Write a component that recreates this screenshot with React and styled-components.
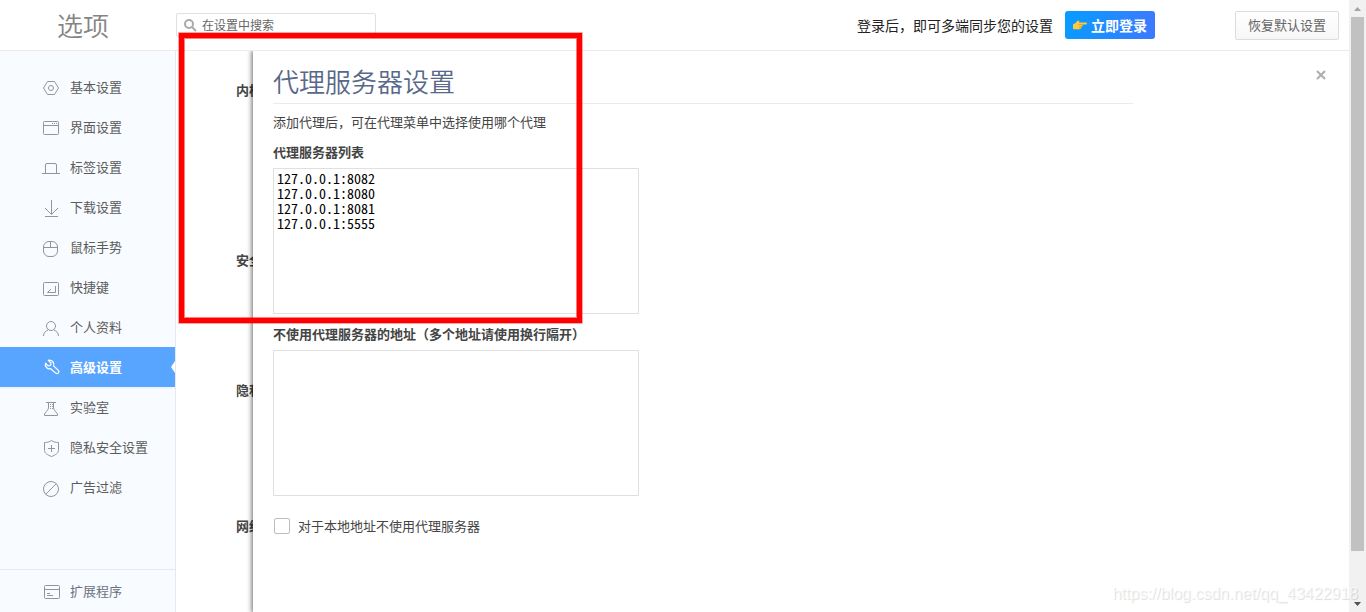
import React from "react";
import styled, { createGlobalStyle, css } from "styled-components";

const sans = '"Noto Sans CJK SC", "Liberation Sans", sans-serif';

const GlobalStyle = createGlobalStyle`
  *, *::before, *::after { box-sizing: border-box; }
  body {
    margin: 0;
    background: #fff;
    color: #444;
    font: 13px/20px ${sans};
  }
  button, input, textarea { font-family: inherit; margin: 0; }
  h1, h2, p, ul { margin: 0; padding: 0; }
`;

const Page = styled.div`
  position: relative;
  display: grid;
  grid-template-columns: minmax(0, 1fr) 17px;
  height: 100vh;
  overflow: hidden;
`;

const Frame = styled.div`
  display: flex;
  flex-direction: column;
  min-height: 0;
`;

const Header = styled.header`
  display: flex;
  align-items: center;
  flex: none;
  height: 51px;
  padding-right: 10px;
  border-bottom: 1px solid #ebebeb;
`;

const Title = styled.h1`
  width: 176px;
  padding-left: 57px;
  font-size: 26px;
  line-height: 36px;
  font-weight: 350;
  color: #858585;
`;

const SearchBox = styled.label`
  display: flex;
  align-items: center;
  gap: 5px;
  width: 200px;
  height: 24px;
  padding: 0 7px;
  border: 1px solid #e0e0e0;
  border-radius: 2px;
`;

const SearchInput = styled.input`
  flex: 1;
  min-width: 0;
  padding: 0;
  border: 0;
  outline: 0;
  background: none;
  font-size: 12px;
  line-height: 20px;
  &::placeholder { color: #666; opacity: 1; }
`;

const SyncHint = styled.p`
  margin-left: auto;
  font-size: 14px;
  color: #222;
`;

const LoginButton = styled.button`
  display: flex;
  align-items: center;
  gap: 4px;
  height: 28px;
  margin-left: 12px;
  padding: 0 8px;
  border: 0;
  border-radius: 3px;
  background: linear-gradient(100deg, #069dff, #3f78ff);
  color: #fff;
  font-size: 14px;
  line-height: 20px;
  font-weight: 700;
`;

const ResetButton = styled.button`
  height: 29px;
  margin-left: 80px;
  padding: 0 12px;
  border: 1px solid #dcdcdc;
  border-radius: 2px;
  background: linear-gradient(#fff, #f7f7f7);
  color: #666;
  font-size: 13px;
  line-height: 20px;
`;

const Body = styled.div`
  display: flex;
  flex: 1;
  min-height: 0;
`;

const Sidebar = styled.nav`
  display: flex;
  flex-direction: column;
  justify-content: space-between;
  flex: none;
  width: 176px;
  border-right: 1px solid #e4e9ef;
  background: #f8fbff;
`;

const NavList = styled.ul`
  list-style: none;
  padding-top: 16px;
`;

const NavFooter = styled.div`
  border-top: 1px solid #e4e9ef;
`;

const NavLink = styled.a`
  position: relative;
  display: flex;
  align-items: center;
  gap: 10px;
  height: ${(p) => (p.$tall ? 42 : 40)}px;
  padding-left: 42px;
  color: ${(p) => (p.$muted ? "#6b7280" : "#5c5c5c")};
  text-decoration: none;
  svg { color: #959595; overflow: visible; }
  ${(p) =>
    p.$active &&
    css`
      background: #57a5ff;
      box-shadow: 0 2px 0 #f0f4f8;
      color: #fff;
      font-weight: 700;
      svg { color: #fff; }
      &::after {
        content: "";
        position: absolute;
        top: 14px;
        right: 0;
        border: 6px solid transparent;
        border-left-width: 0;
        border-right: 4px solid #fff;
      }
    `}
`;

const Content = styled.main`
  position: relative;
  flex: 1;
  min-width: 0;
  overflow: hidden;
`;

const Section = styled.section`
  height: ${(p) => p.$height}px;
  padding-left: 60px;
`;

const Sections = styled.div`
  padding-top: 29px;
`;

const SectionName = styled.h2`
  font-size: 13px;
  line-height: 20px;
  font-weight: 700;
`;

const Drawer = styled.section`
  position: absolute;
  inset: 0 0 0 77px;
  padding: 12px 20px;
  background: #fff;
  box-shadow: 0 0 5px 1px rgba(0, 0, 0, 0.6);
`;

const DrawerTitle = styled.h2`
  max-width: 860px;
  padding-bottom: 4px;
  border-bottom: 1px solid #ebebeb;
  font-size: 26px;
  line-height: 36px;
  font-weight: 350;
  color: #576889;
`;

const CloseButton = styled.button`
  position: absolute;
  top: 14px;
  right: 18px;
  display: grid;
  place-items: center;
  width: 20px;
  height: 20px;
  padding: 0;
  border: 0;
  background: none;
  color: #b0b0b0;
`;

const Note = styled.p`
  margin-top: 8px;
`;

const Field = styled.div`
  display: flex;
  flex-direction: column;
  gap: 6px;
  margin-top: ${(p) => p.$gap}px;
`;

const FieldLabel = styled.label`
  font-weight: 700;
`;

const AddressBox = styled.textarea`
  display: block;
  width: 366px;
  max-width: 100%;
  height: 146px;
  padding: 2px 3px;
  border: 1px solid #e0e0e0;
  outline: 0;
  resize: none;
  color: #000;
  && { font-family: "Noto Sans Mono CJK SC", "Liberation Mono", monospace; }
  font-size: 14px;
  line-height: 15px;
`;

const CheckLabel = styled.label`
  display: flex;
  align-items: center;
  gap: 8px;
  margin-top: 20px;
  padding-left: 1px;
`;

const CheckBox = styled.input`
  appearance: none;
  width: 16px;
  height: 16px;
  border: 1px solid #bdbdbd;
  border-radius: 2px;
  background: #fff;
`;

const ScrollTrack = styled.div`
  display: flex;
  flex-direction: column;
  align-items: center;
  background: #f1f1f1;
`;

const ScrollArrow = styled.div`
  display: grid;
  place-items: center;
  flex: none;
  width: 17px;
  height: 17px;
  color: ${(p) => (p.$dim ? "#a3a3a3" : "#505050")};
`;

const ScrollRail = styled.div`
  flex: 1;
`;

const ScrollThumb = styled.div`
  width: 13px;
  height: 92.4%;
  background: #c1c1c1;
`;

const Highlight = styled.div`
  position: absolute;
  top: 33px;
  left: 179px;
  width: 403px;
  height: 290px;
  border: 5px solid #f00;
  box-shadow: 0 0 0 1px rgba(255, 0, 0, 0.35), inset 0 0 0 1px rgba(255, 0, 0, 0.5);
  pointer-events: none;
`;

const Watermark = styled.div`
  position: absolute;
  right: 8px;
  bottom: 8px;
  font: 16px/20px "Liberation Sans", sans-serif;
  color: rgba(255, 255, 255, 0.7);
  text-shadow: 1px 1px 1px rgba(0, 0, 0, 0.14);
  pointer-events: none;
`;

const Icon = ({ children }) => (
  <svg width="18" height="20" viewBox="0 0 18 20" fill="none" stroke="currentColor" aria-hidden="true">
    {children}
  </svg>
);

const icons = {
  basic: (
    <>
      <path d="M5.500 4.500h7l4 6.500-4 6.500h-7L1.500 11z" strokeLinejoin="round" />
      <circle cx="9" cy="11" r="2.500" />
    </>
  ),
  window: (
    <>
      <rect x="1.500" y="4.500" width="15" height="13" rx="1" />
      <path d="M1.500 8.500h15M10 6.500h1M12 6.500h1M14 6.500h1" />
    </>
  ),
  tab: <path d="M0 16.500h18M3.500 16.500V8q0-1.500 1.500-1.500h8q1.500 0 1.500 1.500v8.500" />,
  download: <path d="M9.500 3v14M3 11l6.500 6.500L16 11M3 19.500h13" />,
  mouse: (
    <>
      <rect x="1.500" y="4.500" width="14" height="15" rx="5.500" />
      <path d="M1.500 10.500h14M8.500 4.500v6" />
    </>
  ),
  keys: (
    <>
      <rect x="1.500" y="5.500" width="15" height="13" rx="1" />
      <path d="M13.500 9v6.500H5.500l3.500-3.500" />
    </>
  ),
  person: (
    <>
      <circle cx="9" cy="9" r="4.500" />
      <path d="M1.500 19c0-3 2-5 4.500-6M16.500 19c0-3-2-5-4.500-6" />
    </>
  ),
  wrench: (
    <path
      strokeLinejoin="round"
      strokeWidth="1.200"
      d="M6.300 3.300l2.700 2.700q.3 1.700-.7 2.300-1 .9-2.300.5L3.500 6.200q-.7 2.500 1 4.300 1.900 1.800 4.200 1.200l5 4.400q1.300 1 2.600-.1 1.200-1.300.1-2.600L11.700 9q.8-2.400-1-4.500-1.900-1.800-4.400-1.200z"
    />
  ),
  lab: (
    <>
      <path d="M4 5.500h10M6.500 5.500v5.500q-.3 1.500-2 3.500L2.500 17v1.500h13V17l-2-2.500q-1.700-2-2-3.500V5.500" />
      <path d="M8.500 7v6M10.500 7v6" strokeDasharray="1 1" />
    </>
  ),
  shield: (
    <path d="M9.500 3.500c2 1.500 4.500 2 7 2v8c0 2.500-3 4.500-7 6-4-1.500-7-3.500-7-6v-8c2.500 0 5-.5 7-2zM9.500 8v7M6 11.500h7" />
  ),
  block: (
    <>
      <circle cx="9" cy="12" r="7.500" />
      <path d="M3.700 17.300L14.300 6.700" />
    </>
  ),
  extension: (
    <>
      <rect x="2.500" y="4.500" width="15" height="13" rx="1" />
      <path d="M2.500 8.500h15M5 12.500h3M5 14.500h6" />
    </>
  ),
};

const navItems = [
  ["basic", "基本设置"],
  ["window", "界面设置"],
  ["tab", "标签设置"],
  ["download", "下载设置"],
  ["mouse", "鼠标手势"],
  ["keys", "快捷键"],
  ["person", "个人资料"],
  ["wrench", "高级设置"],
  ["lab", "实验室"],
  ["shield", "隐私安全设置"],
  ["block", "广告过滤"],
];

const sections = [
  ["内核", 170],
  ["安全", 130],
  ["隐私", 136],
  ["网络", 60],
];

const proxies = ["127.0.0.1:8082", "127.0.0.1:8080", "127.0.0.1:8081", "127.0.0.1:5555"];

const PointingHand = () => (
  <svg width="14" height="12" viewBox="0 0 14 12" aria-hidden="true">
    <path d="M0 5.500L2.500 4Q4 1.500 5.500 1.500q1.500.3.500 2h7q1 .2 1 1t-1 1H9q.8.500.5 1.300t-.8.800q.3 1-.7 1.500 0 1.200-1.300 1.200H3.500Q2 10.300 0 10z" fill="#ffc83d" />
    <path d="M5.500 5.500h3.500M6.500 7.500h2M6 9h2" fill="none" stroke="#c98a2a" strokeWidth=".6" />
  </svg>
);

export default function App() {
  return (
    <Page>
      <GlobalStyle />
      <Frame>
        <Header>
          <Title>选项</Title>
          <SearchBox>
            <svg width="13" height="13" viewBox="0 0 13 13" fill="none" stroke="#aaa" strokeWidth="2" aria-hidden="true">
              <circle cx="5" cy="5" r="4" />
              <path d="M8 8l4 4" />
            </svg>
            <SearchInput type="text" placeholder="在设置中搜索" aria-label="在设置中搜索" />
          </SearchBox>
          <SyncHint>登录后，即可多端同步您的设置</SyncHint>
          <LoginButton type="button">
            <PointingHand />
            立即登录
          </LoginButton>
          <ResetButton type="button">恢复默认设置</ResetButton>
        </Header>
        <Body>
          <Sidebar>
            <NavList>
              {navItems.map(([icon, label]) => (
                <li key={icon}>
                  <NavLink href="#" $active={icon === "wrench"}>
                    <Icon>{icons[icon]}</Icon>
                    {label}
                  </NavLink>
                </li>
              ))}
            </NavList>
            <NavFooter>
              <NavLink href="#" $tall $muted>
                <Icon>{icons.extension}</Icon>
                扩展程序
              </NavLink>
            </NavFooter>
          </Sidebar>
          <Content>
            <Sections>
              {sections.map(([name, height]) => (
                <Section key={name} $height={height}>
                  <SectionName>{name}</SectionName>
                </Section>
              ))}
            </Sections>
            <Drawer>
              <DrawerTitle>代理服务器设置</DrawerTitle>
              <CloseButton type="button" aria-label="关闭">
                <svg width="10" height="10" viewBox="0 0 10 10" stroke="currentColor" strokeWidth="2.200" aria-hidden="true">
                  <path d="M1 1l8 8M9 1L1 9" />
                </svg>
              </CloseButton>
              <Note>添加代理后，可在代理菜单中选择使用哪个代理</Note>
              <Field $gap={10}>
                <FieldLabel htmlFor="proxy-list">代理服务器列表</FieldLabel>
                <AddressBox id="proxy-list" spellCheck={false} defaultValue={proxies.join("\n")} />
              </Field>
              <Field $gap={10}>
                <FieldLabel htmlFor="bypass-list">不使用代理服务器的地址（多个地址请使用换行隔开）</FieldLabel>
                <AddressBox id="bypass-list" spellCheck={false} />
              </Field>
              <CheckLabel>
                <CheckBox type="checkbox" />
                对于本地地址不使用代理服务器
              </CheckLabel>
            </Drawer>
          </Content>
        </Body>
      </Frame>
      <ScrollTrack>
        <ScrollArrow $dim>
          <svg width="7" height="4" viewBox="0 0 7 4" fill="currentColor" aria-hidden="true">
            <path d="M0 4L3.500 0 7 4z" />
          </svg>
        </ScrollArrow>
        <ScrollRail>
          <ScrollThumb />
        </ScrollRail>
        <ScrollArrow>
          <svg width="7" height="4" viewBox="0 0 7 4" fill="currentColor" aria-hidden="true">
            <path d="M0 0h7L3.500 4z" />
          </svg>
        </ScrollArrow>
      </ScrollTrack>
      <Highlight />
      <Watermark>https://blog.csdn.net/qq_43422918</Watermark>
    </Page>
  );
}
